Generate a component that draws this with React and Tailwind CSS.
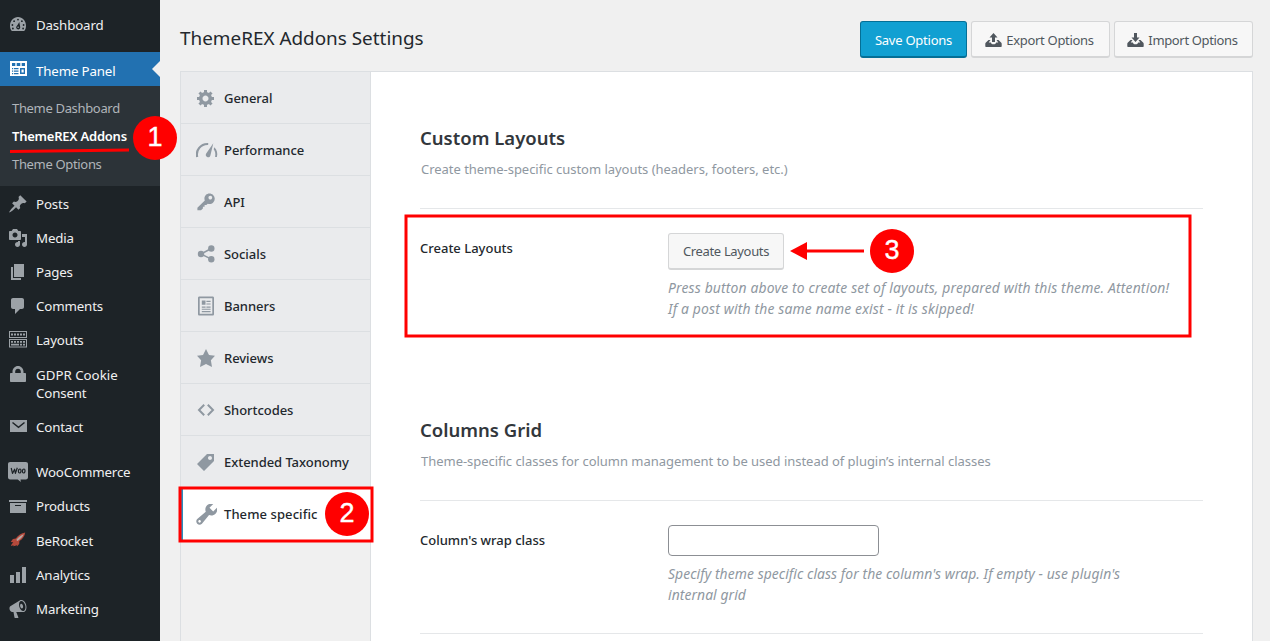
import React from "react";

/* ---------- icons (20 × 20 grid) ---------- */

function Icon({ d, className = "", viewBox = "0 0 20 20", children }) {
  return (
    <svg viewBox={viewBox} className={`size-5 shrink-0 fill-current ${className}`} fillRule="evenodd">
      {d ? <path d={d} /> : children}
    </svg>
  );
}

const PATHS = {
  post: "M10.44 3.02l1.82-1.82 6.36 6.35-1.83 1.82c-1.05-.68-2.48-.57-3.41.36l-.75.75c-.92.93-1.04 2.35-.35 3.41l-1.83 1.82-2.41-2.41-2.8 2.79c-.42.42-3.38 2.71-3.8 2.29s1.86-3.39 2.28-3.81l2.79-2.79L4.1 9.36l1.83-1.82c1.05.69 2.48.57 3.4-.36l.75-.75c.93-.92 1.05-2.35.36-3.41z",
  media: "M13 11V4c0-.55-.45-1-1-1h-1.67L9 1H5L3.67 3H2c-.55 0-1 .45-1 1v7c0 .55.45 1 1 1h10c.55 0 1-.45 1-1zM7 4.5c1.38 0 2.5 1.12 2.5 2.5S8.38 9.5 7 9.5 4.5 8.38 4.5 7 5.62 4.5 7 4.5zM14 6h5v10.5c0 1.38-1.12 2.5-2.5 2.5S14 17.88 14 16.5s1.12-2.5 2.5-2.5c.17 0 .34.02.5.05V9h-3V6zm-4 8.05V13h2v3.5c0 1.38-1.12 2.5-2.5 2.5S7 17.88 7 16.5 8.12 14 9.5 14c.17 0 .34.02.5.05z",
  page: "M6 15V2h10v13H6zm-1 1h8v2H3V5h2v11z",
  comments: "M5 2h9c1.1 0 2 .9 2 2v7c0 1.1-.9 2-2 2h-2l-5 5v-5H5c-1.1 0-2-.9-2-2V4c0-1.1.9-2 2-2z",
  lock: "M14 9h3c.55 0 1 .45 1 1v7c0 .55-.45 1-1 1H3c-.55 0-1-.45-1-1v-7c0-.55.45-1 1-1h1.500V7.500C4.500 4.500 7 2 10 2s5.500 2.500 5.500 5.500V9zm-1.200 0V7.500c0-1.600-1.200-2.800-2.800-2.800S7.200 5.900 7.200 7.500V9h5.600z",
  archive: "M19 4v2H1V4h18zM2 7h16v10H2V7zm11 3V9H7v1h6z",
  chart: "M18 18V2h-4v16h4zm-6 0V7H8v11h4zm-6 0v-8H2v8h4z",
  megaphone: "M18.15 5.94c.46 1.62.38 3.22-.02 4.48-.42 1.28-1.26 2.18-2.3 2.48-.16.06-.26.06-.4.06-.06.02-.12.02-.18.02-.06.02-.14.02-.22.02h-6.8l2.22 5.5c.02.14-.06.26-.14.34-.08.1-.24.16-.34.16H6.95c-.1 0-.26-.06-.34-.16-.08-.08-.16-.2-.14-.34l-1-5.5H4.25l-.02-.02c-.5.06-1.08-.18-1.54-.62s-.88-1.08-1.06-1.88c-.24-.8-.2-1.56-.02-2.2.18-.62.58-1.08 1.06-1.3l.02-.02 9-5.4c.1-.06.18-.1.24-.16.06-.04.14-.08.24-.12.16-.08.28-.12.5-.18 1.04-.3 2.24.1 3.22.98s1.84 2.24 2.26 3.86zm-2.58 5.98h-.02c.4-.1.74-.34 1.04-.7.58-.7.86-1.76.86-3.04 0-.64-.1-1.3-.28-1.98-.34-1.36-1.02-2.5-1.78-3.24s-1.68-1.1-2.46-.88c-.82.22-1.4.96-1.7 2-.32 1.04-.28 2.36.06 3.72.38 1.36 1 2.5 1.8 3.24.78.74 1.62 1.1 2.48.88zm-2.54-7.08c.22-.04.42-.02.62.04.38.16.76.48 1.02 1s.42 1.2.42 1.78c0 .3-.04.56-.12.8-.18.48-.44.84-.86.94-.34.1-.8-.06-1.14-.4s-.64-.86-.78-1.5c-.18-.62-.12-1.24.02-1.72s.48-.84.82-.94z",
  generic: "M18 12h-2.18c-.17.7-.44 1.35-.81 1.93l1.54 1.54-2.1 2.1-1.54-1.54c-.58.36-1.23.63-1.91.79V19H8v-2.18c-.68-.16-1.33-.43-1.91-.79l-1.54 1.54-2.12-2.12 1.54-1.54c-.36-.58-.63-1.23-.79-1.91H1V9.03h2.17c.16-.7.44-1.35.8-1.94L2.43 5.55l2.1-2.1 1.54 1.54c.58-.37 1.24-.64 1.93-.81V2h3v2.18c.68.16 1.33.43 1.91.79l1.54-1.54 2.12 2.12-1.54 1.54c.36.59.64 1.24.8 1.94H18V12zm-8.500 1.500c1.660 0 3-1.340 3-3s-1.340-3-3-3-3 1.340-3 3 1.340 3 3 3z",
  star: "M10 1l3 6 6 .75-4.120 4.620L16 19l-6-3-6 3 1.130-6.630L1 7.750 7 7z",
  tag: "M11 2h7v7L8 19l-7-7zm3 6c1.100 0 2-.9 2-2s-.9-2-2-2-2 .9-2 2 .9 2 2 2z",
  tools: "M16.680 9.770c-1.340 1.340-3.300 1.670-4.950.99l-5.410 6.520c-.99.99-2.590.99-3.580 0s-.99-2.590 0-3.570l6.520-5.420c-.68-1.650-.35-3.610.99-4.950 1.280-1.280 3.120-1.620 4.720-1.060l-2.890 2.890 2.820 2.820 2.860-2.870c.53 1.580.18 3.390-1.080 4.650zM3.810 16.210c.4.39 1.040.39 1.430 0 .4-.4.4-1.040 0-1.430-.39-.4-1.030-.4-1.430 0-.39.39-.39 1.030 0 1.430z",
  key: "M17.100 2.900c2.200 2.200 2.200 5.500.1 7.600-1.500 1.500-3.600 1.900-5.400 1.200L10.300 13H8.600v1.700H6.900v1.700L5 18.200H1.400v-2.400l7.400-7.400c-.8-1.900-.4-4.100 1-5.500 2-2 5.200-2 7.300 0zM15.600 6.900c.8-.8.800-1.900 0-2.600-.7-.8-1.800-.8-2.600 0-.7.700-.7 1.800 0 2.600.8.700 1.900.7 2.600 0z",
};

const GaugeIcon = () => (
  <Icon>
    <path d="M3.800 16h12.400c1.400-1.600 1.800-3.500 1.800-5.600C18 6 14.400 2 10 2S2 6 2 10.400c0 2.100.4 4 1.800 5.600z" />
    <g className="fill-[#1d2327]">
      <circle cx="10" cy="4.600" r=".9" /><circle cx="6.100" cy="6.200" r=".9" /><circle cx="13.900" cy="6.200" r=".9" />
      <circle cx="4.400" cy="10" r=".9" /><circle cx="15.600" cy="10" r=".9" />
      <path d="M11.300 7l.9 5c.2 1.300-.8 2.400-2.100 2.400S7.900 13.300 8.200 12.100c.2-1 1-1.500 1.500-2.400z" />
      <circle cx="4.900" cy="13.500" r=".9" /><circle cx="15.100" cy="13.500" r=".9" />
    </g>
    <circle cx="10.100" cy="12.300" r=".8" />
  </Icon>
);
const PanelIcon = () => (
  <Icon className="text-white">
    <path d="M2 1h17v15H2zM4 3v3h3.300V3zm4.700 0v3h3.600V3zm5 0v3H17V3zM4 8v1.200h1.200V8zm2 0v1.200h4.500V8zm-2 2.500v1.200h1.200v-1.200zm2 0v1.200h4.500v-1.200zM4 13v1.200h1.200V13zm2 0v1.200h4.500V13zm6-5v6h5V8zm1.500 1.500h2.200v3h-2.200z" />
  </Icon>
);
const LayoutsIcon = () => (
  <Icon>
    <path d="M1 1h18v7H1zM2 2v5h16V2zM1 9h18v8.500H1zM2 10v6.500h16V10z" />
    <path d="M3 3.500h2v2H3zm3 0h2v2H6zm3 0h2v2H9zm3 0h2v2h-2zm3 0h2v2h-2zM3 11h2v1.700H3zm3 0h2v1.700H6zm3 0h2v1.700H9zm3 0h2v1.700h-2zm3 0h2v1.700h-2zM3 13.800h8v1.700H3zm9 0h2v1.700h-2zm3 0h2v1.700h-2z" />
  </Icon>
);
const MailIcon = () => (
  <Icon>
    <rect x="2" y="3" width="17" height="12" />
    <path d="M4.500 5.500l6 4.800 6-4.800" fill="none" stroke="#1d2327" strokeWidth="1.500" />
  </Icon>
);
const WooIcon = () => (
  <Icon>
    <path d="M2.200 0h15.600C19.200 0 20 .9 20 2.200v13c0 1.300-.8 2.200-2.200 2.200h-5.300l.3 2.600-3-2.600H2.200C.8 17.400 0 16.500 0 15.200v-13C0 .9.8 0 2.200 0z" />
    <path
      d="M3.200 6l1.300 5.400L6.600 7.200l.8 4.200L9.300 5.800M12 7c-1.100 0-1.600 1-1.600 2.200s.4 1.800 1.100 1.800c1 0 1.500-1.100 1.500-2.200S12.700 7 12 7zm4 0c-1.100 0-1.600 1-1.600 2.200s.4 1.800 1.100 1.800c1 0 1.500-1.100 1.500-2.200S16.700 7 16 7z"
      fill="none" stroke="#1d2327" strokeWidth="1.200" strokeLinejoin="round"
    />
  </Icon>
);
const RocketIcon = () => (
  <Icon className="text-[#b5493b]">
    <path d="M17.200 1.400c-3.800.4-7 2.800-9.400 6l-2.900.7-2.200 2.900 2.500.2-2.200 3 .6.8 1.900-1-.3 1.200 2.300-.4 1.100-.8.300 1.600 2.300-2.700.2-2.800c3.200-2.300 5.500-5 5.800-8.700z" />
    <path d="M15.700 3.200c-1.100 2.600-3.400 4.900-6.200 6.900l-1.200-1.200c2-2.600 4.500-4.700 7.400-5.700z" className="fill-[#b9a7a3]" />
  </Icon>
);
const PerformanceIcon = () => (
  <svg viewBox="0 0 22 20" className="-mr-0.5 h-5 w-[22px] shrink-0 fill-current">
    <path d="M1.200 17C-.4 10.500 4.500 3.600 12.200 4" fill="none" stroke="currentColor" strokeWidth="2.200" />
    <path d="M17.300 3.200l-2.900 12.200c-.5 1.700-1.900 2.200-3.300 1.600-1.400-.7-1.700-2-.9-3.400zM18.300 7.300c2.700 2.600 3.600 6.200 2.600 9.700h-1.800c.6-3.100.2-5.500-1.400-7.800z" />
  </svg>
);
const ShareIcon = () => (
  <Icon>
    <circle cx="15.300" cy="4.500" r="3.200" /><circle cx="5" cy="10" r="3.200" /><circle cx="15.300" cy="15.200" r="3.200" />
    <path d="M15.300 4.500L5 10l10.300 5.200" fill="none" stroke="currentColor" strokeWidth="1.500" />
  </Icon>
);
const BannersIcon = () => (
  <Icon>
    <path d="M3.500.5h13c1 0 1.500.5 1.500 1.500v16c0 1-.5 1.500-1.500 1.500h-13C2.500 19.500 2 19 2 18V2c0-1 .5-1.500 1.500-1.500zM3.700 2.200v15.600h12.600V2.200z" />
    <path d="M5.800 4.500h3.700v4.300H5.800zm4.600.3h4.200V6h-4.200zm0 2.600h4.200v1.200h-4.200zM5.800 10.500h3.800v1.200H5.800zm4.600 0h4.200v1.200h-4.200zM5.800 12.700h8.800v1H5.800zm0 2.300h8.800v1.200H5.800z" />
  </Icon>
);
const CodeIcon = () => (
  <Icon>
    <path d="M8.200 4.700L3 10l5.200 5.300M11.800 4.700L17 10l-5.200 5.300" fill="none" stroke="currentColor" strokeWidth="2" />
  </Icon>
);
const TrayIcon = ({ up }) => (
  <svg viewBox="0 0 17 14" className="-ml-0.5 mb-px h-3.5 w-[17px] shrink-0 fill-current">
    <path d={up ? "M8.500 0l4 4.500H10V9H7V4.500H4.500z" : "M8.500 9l4-4.500H10V0H7v4.500H4.500z"} />
    <path d="M3.500 7h2L3.700 9.500h2.100c.4 1.300 1.400 1.800 2.700 1.800s2.300-.5 2.700-1.800h2.100L11.500 7h2l2.800 2.800c.3.300.4.700.4 1.100V13c0 .6-.3 1-1 1H1.300c-.7 0-1-.4-1-1v-2.100c0-.4.1-.8.400-1.100z" />
  </svg>
);

/* ---------- admin side menu ---------- */

function MenuItem({ icon, children, className = "h-[34px] pt-[7px]", text = "mt-px text-[#f0f0f1]" }) {
  return (
    <div className={`flex gap-2 pl-2 ${className}`}>
      {icon}
      <span className={`text-[13.3px] leading-[18px] tracking-[-0.15px] ${text}`}>{children}</span>
    </div>
  );
}

function SideMenu() {
  return (
    <nav className="flex w-40 shrink-0 flex-col bg-[#1d2327] text-[#9ca2a7]">
      <div className="h-[52px] pt-2">
        <MenuItem icon={<GaugeIcon />}>Dashboard</MenuItem>
      </div>
      <div className="flex h-[34px] items-center justify-between bg-[#2271b1]">
        <MenuItem icon={<PanelIcon />} className="h-[34px] pt-2" text="mt-[2px] text-white">Theme Panel</MenuItem>
        <span className="border-y-8 border-r-8 border-y-transparent border-r-[#f0f0f0]" />
      </div>
      <ul className="h-[100px] bg-[#2c3338] pl-3 pt-2 text-[13px] leading-7 text-[#b0b5ba]">
        <li className="tracking-[-0.33px]">Theme Dashboard</li>
        <li className="font-semibold tracking-[-0.24px] text-white">ThemeREX Addons</li>
        <li className="tracking-[-0.33px]">Theme Options</li>
      </ul>
      <div className="flex flex-col pt-px">
        <MenuItem icon={<Icon d={PATHS.post} />}>Posts</MenuItem>
        <MenuItem icon={<Icon d={PATHS.media} />}>Media</MenuItem>
        <MenuItem icon={<Icon d={PATHS.page} />}>Pages</MenuItem>
        <MenuItem icon={<Icon d={PATHS.comments} />}>Comments</MenuItem>
        <MenuItem icon={<LayoutsIcon />}>Layouts</MenuItem>
        <MenuItem
          icon={<Icon d={PATHS.lock} />}
          className="h-[53px] pt-[7px]"
          text="mt-[2px] text-[#f0f0f1]"
        >
          <span className="tracking-[0px]">GDPR Cookie</span><br />Consent
        </MenuItem>
        <MenuItem icon={<MailIcon />} className="mb-[11px] h-[34px] pt-[7px]">Contact</MenuItem>
        <MenuItem icon={<WooIcon />}>WooCommerce</MenuItem>
        <MenuItem icon={<Icon d={PATHS.archive} />} className="h-[35px] pt-[7px]">Products</MenuItem>
        <MenuItem icon={<RocketIcon />}>BeRocket</MenuItem>
        <MenuItem icon={<Icon d={PATHS.chart} />}>Analytics</MenuItem>
        <MenuItem icon={<Icon d={PATHS.megaphone} />}>Marketing</MenuItem>
      </div>
    </nav>
  );
}

/* ---------- settings ---------- */

const TABS = [
  ["General", <Icon d={PATHS.generic} />],
  ["Performance", <PerformanceIcon />],
  ["API", <Icon d={PATHS.key} />],
  ["Socials", <ShareIcon />],
  ["Banners", <BannersIcon />],
  ["Reviews", <Icon d={PATHS.star} />],
  ["Shortcodes", <CodeIcon />],
  ["Extended Taxonomy", <Icon d={PATHS.tag} />],
];

function Tabs() {
  return (
    <ul className="w-[190px] shrink-0 text-[13px] font-medium text-[#23282d]">
      {TABS.map(([label, icon]) => (
        <li key={label} className="flex h-[52px] items-center gap-2 border-b border-r border-[#dcdfe2] bg-[#eaebed] pl-[15px]">
          <span className="flex text-[#8f98a1]">{icon}</span>
          <span className="pt-0.5 tracking-[-0.05px]">{label}</span>
        </li>
      ))}
      <li className="flex h-[52px] items-center gap-[7px] border-l-2 border-[#2b8fbe] bg-white pl-[13px]">
        <span className="flex text-[#8f98a1]">
          <Icon d={PATHS.tools} viewBox="1.800 2.300 16 16" className="size-[21px]" />
        </span>
        <span className="pt-0.5 tracking-[0.08px]">Theme specific</span>
      </li>
      <li className="h-[103px] border-r border-t border-[#dcdfe2] bg-[#f0f0f0]" />
    </ul>
  );
}

function Button({ children, className }) {
  return (
    <button
      className={`flex h-[37px] items-center justify-center gap-1 rounded-[3px] border border-b-2 text-[13px] ${className}`}
    >
      {children}
    </button>
  );
}

const PLAIN = "border-[#d5d6d7] bg-[#f7f7f7] text-[#50575e]";

function Section({ title, note, children, className }) {
  return (
    <section className={className}>
      <h2 className="text-[18.5px] font-semibold leading-6 text-[#32373c]">{title}</h2>
      <p className="mt-[9px] border-b border-[#e5e7e9] pb-[29px] pl-px text-[13px] leading-5 tracking-[-0.03px] text-[#8f98a1]">{note}</p>
      {children}
    </section>
  );
}

function Field({ label, hint, children, className = "", hintClass = "" }) {
  return (
    <div className={`flex pt-6 ${className}`}>
      <div className="w-[248px] pt-[5px] text-[13px] font-medium leading-5 text-[#23282d]">{label}</div>
      <div className="w-[520px]">
        {children}
        <p className={`mt-[7px] text-[13.9px] italic leading-[21px] text-[#8f98a1] ${hintClass}`}>{hint}</p>
      </div>
    </div>
  );
}

/* ---------- numbered callouts drawn over the page ---------- */

function Badge({ n, className }) {
  return (
    <span className={`absolute flex size-11 items-center justify-center rounded-full bg-[#ff0000] pb-[2px] font-['Liberation_Sans',sans-serif] text-[27px] leading-none text-white [-webkit-text-stroke:0.4px_white] ${className}`}>
      {n}
    </span>
  );
}

function Callouts() {
  return (
    <div className="pointer-events-none absolute inset-0">
      <svg viewBox="0 0 1270 641" className="size-full" fill="none" stroke="#ff0000" strokeWidth="3">
        <path d="M10 151.500L129 150" />
        <rect x="180" y="488" width="192" height="53" />
        <rect x="406" y="216" width="784" height="120" />
        <path d="M806 251H864" />
        <path d="M790 251l17-9v18z" fill="#ff0000" stroke="none" />
      </svg>
      <Badge n="1" className="left-[133px] top-[116px]" />
      <Badge n="2" className="left-[325px] top-[492px]" />
      <Badge n="3" className="left-[870px] top-[229px]" />
    </div>
  );
}

export default function App() {
  return (
    <div className="relative flex h-[641px] w-[1270px] overflow-hidden bg-[#f0f0f0] font-['Noto_Sans','Open_Sans',sans-serif]">
      <SideMenu />
      <main className="flex w-[1093px] flex-col pl-5">
        <header className="flex h-[71px] items-start justify-between pt-[21px]">
          <h1 className="pt-[3px] text-[18.9px] leading-7 text-[#23282d]">ThemeREX Addons Settings</h1>
          <div className="flex gap-1">
            <Button className="w-[107px] border-[#046f96] bg-[#11a0d2] pt-[3px] tracking-[-0.24px] text-white">Save Options</Button>
            <Button className={`w-[139px] pt-[3px] tracking-[-0.3px] ${PLAIN}`}><TrayIcon up />Export Options</Button>
            <Button className={`w-[139px] pt-[3px] tracking-[-0.35px] ${PLAIN}`}><TrayIcon />Import Options</Button>
          </div>
        </header>
        <div className="flex h-[570px] overflow-hidden border border-b-0 border-[#dcdfe2] bg-white">
          <Tabs />
          <div className="w-[832px] pl-[49px] pt-[54px]">
            <Section title="Custom Layouts" note="Create theme-specific custom layouts (headers, footers, etc.)" className="h-[292px]">
              <Field
                label="Create Layouts"
                hintClass="tracking-[0.16px]"
                hint={<>Press button above to create set of layouts, prepared with this theme. Attention!<br />If a post with the same name exist - it is skipped!</>}
              >
                <Button className={`w-[116px] pt-[2px] tracking-[-0.34px] ${PLAIN}`}>Create Layouts</Button>
              </Field>
            </Section>
            <Section title="Columns Grid" note="Theme-specific classes for column management to be used instead of plugin’s internal classes">
              <Field
                label="Column's wrap class"
                className="border-b border-[#e5e7e9] pb-7"
                hintClass="tracking-[0.07px]"
                hint={<>Specify theme specific class for the column's wrap. If empty - use plugin's<br />internal grid</>}
              >
                <input className="block h-[31px] w-[211px] rounded border border-[#8c8f94] bg-white" />
              </Field>
            </Section>
          </div>
        </div>
      </main>
      <Callouts />
    </div>
  );
}
